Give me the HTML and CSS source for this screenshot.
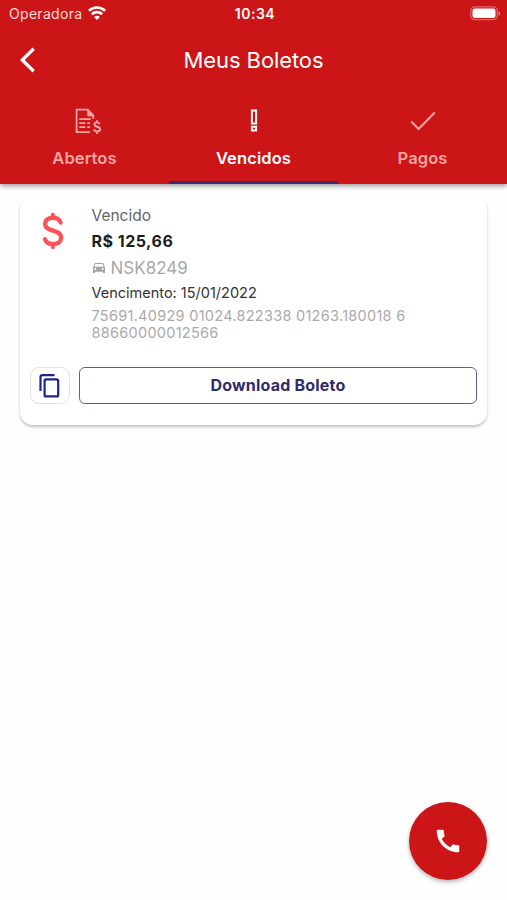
FILE: index.html
```html
<!DOCTYPE html>
<html lang="pt-BR">
<head>
<meta charset="utf-8">
<title>Meus Boletos</title>
<link rel="stylesheet" href="styles.css">
</head>
<body>
<header class="header">
  <div class="status">
    <div class="carrier"><span class="carrier-name">Operadora</span>
      <svg class="wifi" width="18" height="14" viewBox="0 0 18 14" fill="none" stroke="#fff" stroke-width="2.6"><path d="M.9 4.8a11.7 11.7 0 0 1 16.2 0M3.8 8.200a7.500 7.500 0 0 1 10.400 0"/><path d="M9 14 6.100 11a4 4 0 0 1 5.800 0z" fill="#fff" stroke="none"/></svg>
    </div>
    <span class="clock">10:34</span>
    <svg class="battery" width="31" height="15" viewBox="0 0 31 15"><rect x=".8" y=".8" width="26.4" height="12.9" rx="4" fill="none" stroke="#e06a6d" stroke-width="1.2"/><rect x="2.5" y="2.5" width="23" height="9.5" rx="2.3" fill="#fff"/><path d="M28.5 5v4.7q1.7-.7 1.7-2.3T28.5 5z" fill="#e98285"/></svg>
  </div>
  <div class="appbar">
    <svg class="back" width="18" height="26" viewBox="0 0 18 26" fill="none" stroke="#fff" stroke-width="3.3"><path d="M14.7 1.8 3.3 13l11.4 11.2"/></svg>
    <h1 class="title">Meus Boletos</h1>
  </div>
  <nav class="tabs">
    <a class="tab">
      <svg width="28" height="28" viewBox="-3.300 -.9 28 28" fill="none" stroke="currentColor" stroke-width="1.8"><path d="M15.500 24.200H2.300V1.800h11.200l5.500 6v3"/><path d="M13.500 2v6h5.500z" fill="currentColor" stroke-width="1"/><path d="M5 11.200h11.500M5 15.200h6M13 15.200h2.800M5 19.200h6M13 19.200h2.800"/><path d="M25.300 16.200c-.4-1.200-1.200-1.700-2.500-1.700-1.500 0-2.600.8-2.600 2.100 0 3.100 5.600 1.400 5.600 4.700 0 1.500-1.200 2.300-3 2.300-1.700 0-2.800-.8-3.100-2.200M22.800 12.300v2.200M22.800 23.600v2.500" stroke-width="1.9"/></svg>
      <span>Abertos</span>
    </a>
    <a class="tab active">
      <svg width="28" height="28" viewBox="0 0 28 28" fill="none" stroke="currentColor" stroke-width="2"><path d="M11.900 3.500h4.200v13h-4.200zM11.900 19.700h4.200v3.700h-4.200z"/></svg>
      <span>Vencidos</span>
    </a>
    <a class="tab">
      <svg width="28" height="28" viewBox="0 0 28 28" fill="none" stroke="currentColor" stroke-width="2.1"><path d="m2.2 14.5 7.4 7.6L25.8 5.5"/></svg>
      <span>Pagos</span>
    </a>
  </nav>
</header>
<main class="list">
  <article class="card">
    <div class="summary">
      <svg class="dollar" width="24" height="40" viewBox="-.6 0 25.600 40" preserveAspectRatio="none" fill="none" stroke="#ff5256" stroke-width="4.4" stroke-linecap="round"><path d="M20.3 11.4C18.9 8.3 16 6.8 12.1 6.8c-4.900 0-8.300 2.200-8.300 6.100 0 8.600 17 4.600 17 13.700 0 4.100-3.400 6.500-8.600 6.500-4.300 0-7.400-1.700-8.700-4.900M12 3.900v2.800M12 33.200v2.700"/></svg>
      <div class="details">
        <div class="state">Vencido</div>
        <div class="amount">R$ 125,66</div>
        <div class="vehicle"><svg width="12" height="10" viewBox="3 5 18 16" preserveAspectRatio="none" fill="#a4a4a4"><path d="M18.920 6.010C18.720 5.420 18.160 5 17.500 5h-11c-.66 0-1.210.42-1.420 1.010L3 12v8c0 .55.45 1 1 1h1c.55 0 1-.45 1-1v-1h12v1c0 .55.45 1 1 1h1c.55 0 1-.45 1-1v-8l-2.080-5.990zM6.500 16a1.500 1.500 0 1 1 0-3 1.500 1.500 0 0 1 0 3zm11 0a1.500 1.500 0 1 1 0-3 1.500 1.500 0 0 1 0 3zM5 11l1.500-4.500h11L19 11H5z" fill-rule="evenodd"/></svg><span>NSK8249</span></div>
        <div class="due">Vencimento: 15/01/2022</div>
        <div class="barcode">75691.40929 01024.822338 01263.180018 6<br>88660000012566</div>
      </div>
    </div>
    <div class="actions">
      <button class="copy" aria-label="Copiar"><svg width="24" height="26" viewBox="0 0 24 26" fill="none" stroke="#1c2490" stroke-width="2.2"><path d="M2.500 18V4.200q0-2 2-2h12"/><rect x="6.600" y="6.400" width="13.600" height="17" rx="1.500"/></svg></button>
      <button class="download">Download Boleto</button>
    </div>
  </article>
</main>
<button class="call" aria-label="Ligar"><svg width="30" height="30" viewBox="0 0 24 24" fill="#fff"><path d="M20.010 15.380c-1.230 0-2.420-.2-3.530-.56a.977.977 0 0 0-1.010.24l-1.570 1.970c-2.830-1.350-5.480-3.900-6.890-6.830l1.950-1.660c.27-.28.350-.67.240-1.020-.37-1.110-.56-2.300-.56-3.530 0-.54-.45-.99-.99-.99H4.190C3.650 3 3 3.240 3 3.990 3 13.280 10.730 21 20.010 21c.71 0 .99-.63.99-1.180v-3.450c0-.54-.45-.99-.99-.99z"/></svg></button>
</body>
</html>
```
FILE: styles.css
```css
* { box-sizing: border-box; }
body {
  margin: 0;
  min-height: 900px;
  background: #fefefe;
  font-family: Inter, "Liberation Sans", sans-serif;
}
button { padding: 0; font: inherit; }
svg { display: block; flex: none; overflow: visible; }
.header {
  position: relative;
  height: 184px;
  background: #cb1517;
  color: #fff;
  box-shadow: 0 2px 5px rgba(0, 0, 0, .4);
}
.status {
  display: grid;
  grid-template-columns: 1fr auto 1fr;
  align-items: center;
  height: 28px;
  padding: 0 6px 2px 9px;
}
.carrier { display: flex; align-items: center; gap: 6px; }
.carrier-name { font-size: 14px; letter-spacing: .3px; color: #fbdcdc; }
.wifi { margin-top: -1px; }
.clock { font-size: 14px; font-weight: 600; letter-spacing: .5px; }
.battery { justify-self: end; }
.appbar {
  display: grid;
  grid-template-columns: 18px 1fr 18px;
  align-items: center;
  height: 64px;
  padding: 0 19px;
}
.title { margin: 0; text-align: center; font-size: 22px; font-weight: 400; letter-spacing: -.1px; }
.tabs { display: grid; grid-template-columns: repeat(3, 1fr); height: 92px; }
.tab {
  display: flex;
  flex-direction: column;
  align-items: center;
  padding-top: 15px;
  gap: 13px;
  color: #f5a5a5;
  font-size: 16.500px;
  line-height: 20px;
  font-weight: 600;
  letter-spacing: .1px;
}
.tab.active { color: #fff; border-bottom: 3px solid #3a2b72; }
.list { padding: 12px 20px; }
.card {
  height: 229px;
  padding: 8px 10px 0;
  border-radius: 13px;
  background: #fff;
  box-shadow: 0 2px 3px rgba(0, 0, 0, .24);
}
.summary { display: flex; gap: 27px; height: 163px; padding-left: 11px; }
.dollar { margin-top: 7px; }
.details { margin-left: -.5px; white-space: nowrap; }
.state { height: 24px; font-size: 15.500px; line-height: 24px; color: #666; }
.amount { height: 27px; font-size: 16px; line-height: 27px; font-weight: 700; letter-spacing: .5px; color: #1d1d1d; }
.vehicle { display: flex; align-items: center; gap: 6px; height: 26px; padding-left: 1px; font-size: 17px; color: #a8a8a8; }
.due { height: 24px; font-size: 14.500px; line-height: 23px; color: #333; }
.barcode { padding-top: 2px; font-size: 14.500px; line-height: 17px; letter-spacing: .28px; color: #aaa; }
.actions { display: flex; gap: 9px; }
.copy {
  display: grid;
  place-items: center;
  width: 40px;
  height: 37px;
  border: 1px solid #e2e2e5;
  border-radius: 9px;
  background: #fff;
}
.download {
  flex: 1;
  height: 37px;
  padding-bottom: 2px;
  border: 1.500px solid #625b98;
  border-radius: 6px;
  background: #fff;
  color: #302b6b;
  font-size: 16px;
  font-weight: 700;
  letter-spacing: .2px;
}
.call {
  position: fixed;
  right: 20px;
  bottom: 20px;
  display: grid;
  place-items: center;
  width: 78px;
  height: 78px;
  border: 0;
  border-radius: 50%;
  background: #cb1517;
  box-shadow: 0 2px 4px rgba(0, 0, 0, .3);
}
```
